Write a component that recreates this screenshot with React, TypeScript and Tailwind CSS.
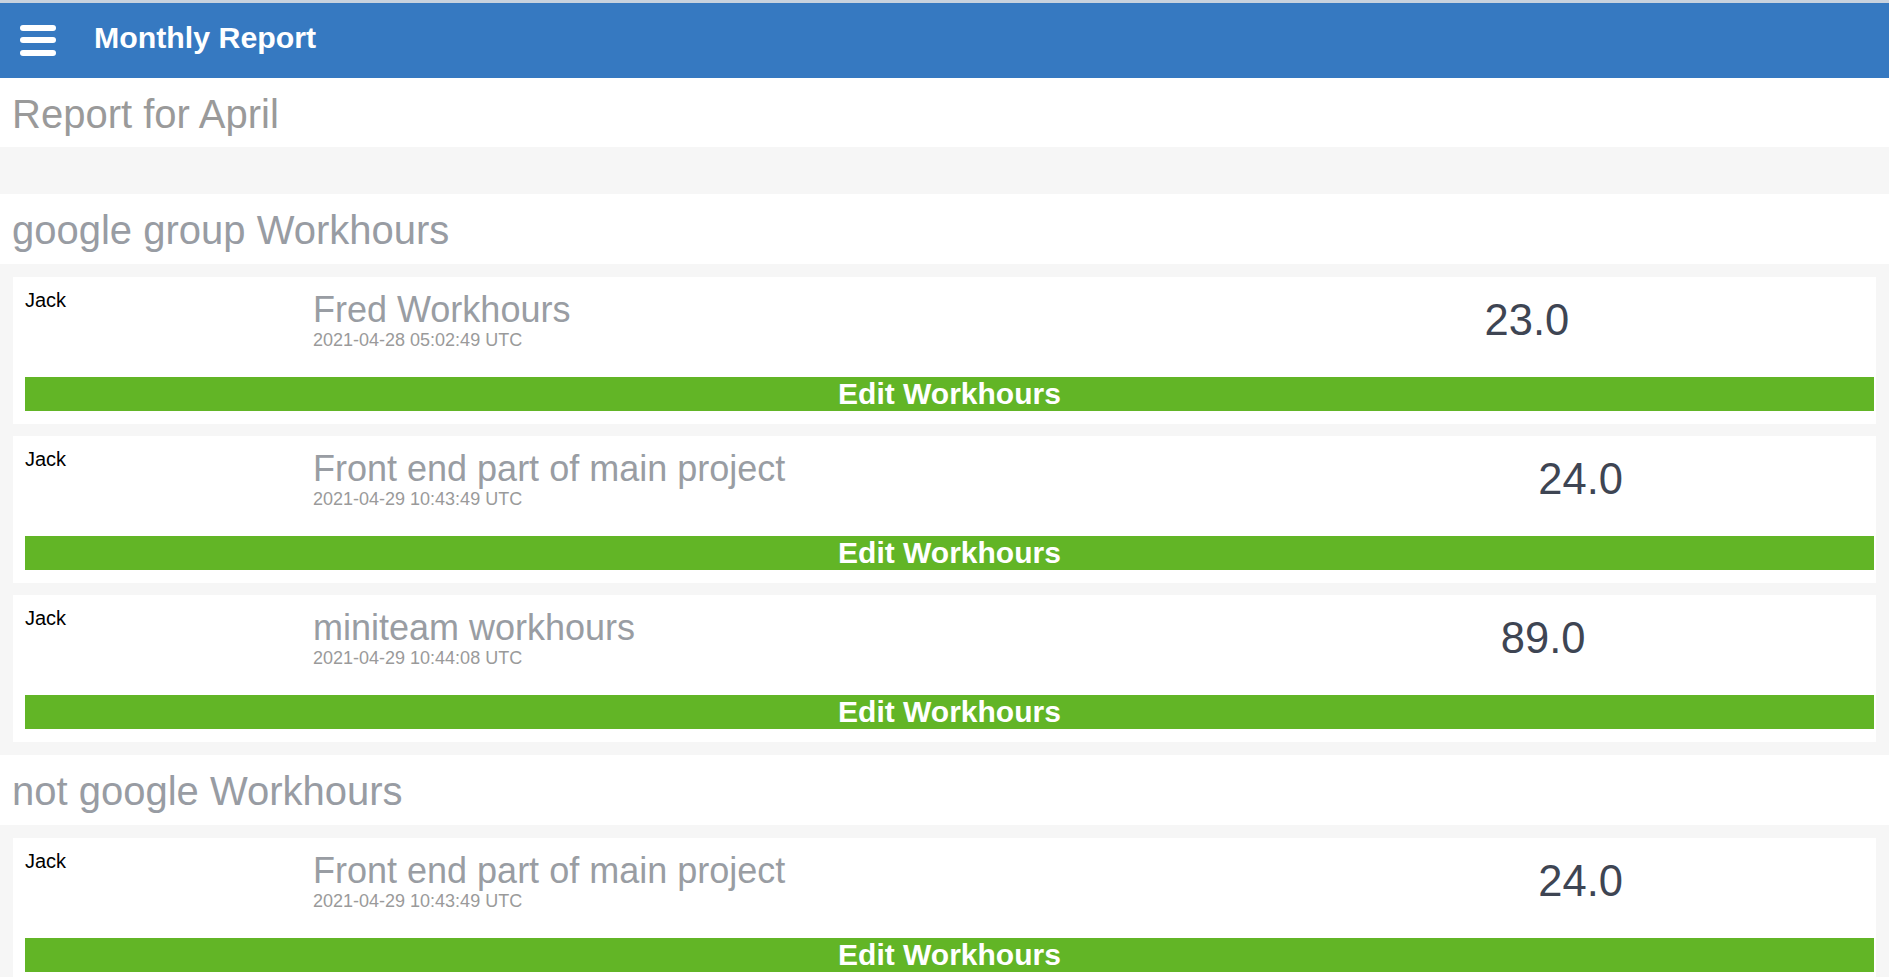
import React from 'react'

interface WorkEntry {
  id: string
  user: string
  title: string
  createdAt: string
  hours: string
}

interface WorkGroup {
  id: string
  name: string
  entries: WorkEntry[]
}

const groups: WorkGroup[] = [
  {
    id: 'google',
    name: 'google group Workhours',
    entries: [
      { id: 'g1', user: 'Jack', title: 'Fred Workhours', createdAt: '2021-04-28 05:02:49 UTC', hours: '23.0' },
      { id: 'g2', user: 'Jack', title: 'Front end part of main project', createdAt: '2021-04-29 10:43:49 UTC', hours: '24.0' },
      { id: 'g3', user: 'Jack', title: 'miniteam workhours', createdAt: '2021-04-29 10:44:08 UTC', hours: '89.0' },
    ],
  },
  {
    id: 'not-google',
    name: 'not google Workhours',
    entries: [
      { id: 'n1', user: 'Jack', title: 'Front end part of main project', createdAt: '2021-04-29 10:43:49 UTC', hours: '24.0' },
    ],
  },
]

const MenuIcon = () => (
  <svg width="36" height="31" viewBox="0 0 36 31" aria-hidden="true">
    <rect x="0" y="0" width="36" height="6" rx="3" fill="#fff" />
    <rect x="0" y="12" width="36" height="6" rx="3" fill="#fff" />
    <rect x="0" y="25" width="36" height="6" rx="3" fill="#fff" />
  </svg>
)

const EntryCard: React.FC<{ entry: WorkEntry }> = ({ entry }) => (
  <div className="bg-white pt-[12px] pl-[12px] pr-[2px] pb-[13px]">
    <div className="flex items-center h-[61px]">
      <div className="w-[288px] shrink-0 self-start pt-[2px] text-[20px] leading-[18px] text-black">{entry.user}</div>
      <div className="grow-[3] pt-[1px]">
        <div className="text-[36px] leading-[40px] text-[#999da3] whitespace-nowrap">{entry.title}</div>
        <div className="text-[18px] leading-[20px] text-[#9a9a9a] whitespace-nowrap">{entry.createdAt}</div>
      </div>
      <div className="grow text-[43.5px] leading-[48px] text-[#3e4553]">{entry.hours}</div>
    </div>
    <button className="mt-[27px] block w-full h-[34px] bg-[#62b526] text-white font-bold text-[30px] leading-[34px] text-center">
      Edit Workhours
    </button>
  </div>
)

export default function App() {
  return (
    <div className="min-h-screen bg-white font-['Liberation_Sans',Arial,sans-serif]">
      <header className="h-[78px] border-t-[3px] border-[#c8d2de] bg-[#3679c1] flex items-center pl-[20px]">
        <MenuIcon />
        <span className="ml-[38px] mb-[6px] text-white font-bold text-[30.3px] leading-[34px]">Monthly Report</span>
      </header>

      <div className="h-[69px] pt-[13px] pl-[12px]">
        <h1 className="text-[40px] leading-[46px] text-[#9a9a9a]">Report for April</h1>
      </div>
      <div className="h-[47px] bg-[#f6f6f6]" />

      {groups.map((group) => (
        <section key={group.id}>
          <div className="h-[70px] pt-[13px] pl-[12px] bg-white">
            <h2 className="text-[40px] leading-[46px] text-[#989ca3]">{group.name}</h2>
          </div>
          <div className="bg-[#f6f6f6] pt-[13px] pb-[13px] pl-[13px] pr-[13px] flex flex-col gap-[12px]">
            {group.entries.map((entry) => (
              <EntryCard key={entry.id} entry={entry} />
            ))}
          </div>
        </section>
      ))}
    </div>
  )
}
